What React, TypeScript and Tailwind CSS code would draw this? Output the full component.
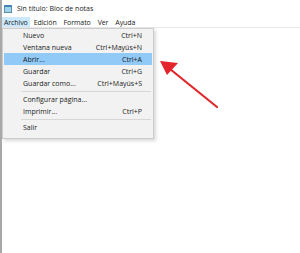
import * as React from 'react';

interface MenuItem {
	label: string;
	shortcut?: string;
	active?: boolean;
	separatorBefore?: boolean;
}

const menuItems: readonly MenuItem[] = [
	{ label: 'Nuevo', shortcut: 'Ctrl+N' },
	{ label: 'Ventana nueva', shortcut: 'Ctrl+Mayús+N' },
	{ label: 'Abrir...', shortcut: 'Ctrl+A', active: true },
	{ label: 'Guardar', shortcut: 'Ctrl+G' },
	{ label: 'Guardar como...', shortcut: 'Ctrl+Mayús+S' },
	{ label: 'Configurar página...', separatorBefore: true },
	{ label: 'Imprimir...', shortcut: 'Ctrl+P' },
	{ label: 'Salir', separatorBefore: true },
];

const menuBar = ['Archivo', 'Edición', 'Formato', 'Ver', 'Ayuda'];

function NotepadIcon() {
	return (
		<svg width="8" height="8" viewBox="0 0 8 8">
			<rect x="0.5" y="0.5" width="7" height="7" fill="#9fd3ec" stroke="#5a8fb0" strokeWidth="1" />
			<rect x="0.5" y="0.5" width="7" height="1.5" fill="#3b7fb5" />
		</svg>
	);
}

export default function App() {
	return (
		<div
			className="relative w-[300px] h-[253px] bg-white border-l-2 border-[#a8a8a8] overflow-hidden text-[#1a1a1a]"
			style={{ fontFamily: '"Open Sans", "Noto Sans", sans-serif' }}
		>
			{/* title bar */}
			<div className="h-[17px] flex items-center pl-[2px] gap-[5px]">
				<NotepadIcon />
				<span className="text-[7px] leading-none">Sin título: Bloc de notas</span>
			</div>

			{/* menu bar */}
			<div className="h-[11px] flex items-center border-b border-[#e8e8e8] text-[7px] leading-none tracking-[-0.1px]">
				{menuBar.map((m, i) => (
					<span
						key={m}
						className={`h-full flex items-center ${
							i === 0 ? 'bg-[#cce8ff] px-[2px] mr-[2px]' : 'px-[2px] mr-[3px]'
						}`}
					>
						{m}
					</span>
				))}
			</div>

			{/* dropdown */}
			<div className="absolute left-[0px] top-[28px] w-[152px] bg-[#f2f2f2] border border-[#cccccc] shadow-[2px_2px_3px_rgba(0,0,0,0.15)] pb-[5px] text-[7px] leading-none">
				{menuItems.map((item) => (
					<React.Fragment key={item.label}>
						{item.separatorBefore && (
							<div className="h-[4px] flex items-center pl-[18px] pr-[2px]">
								<div className="w-full h-px bg-[#d7d7d7]" />
							</div>
						)}
						<div
							className={`h-[12px] flex items-center justify-between pl-[19px] pr-[10px] mx-[1px] ${
								item.active ? 'bg-[#91c9f7]' : ''
							}`}
						>
							<span>{item.label}</span>
							<span>{item.shortcut}</span>
						</div>
					</React.Fragment>
				))}
			</div>

			{/* red arrow */}
			<svg className="absolute left-0 top-0" width="300" height="253" viewBox="0 0 300 253">
				<line x1="215" y1="107" x2="168" y2="69" stroke="#e3262b" strokeWidth="2.2" strokeLinecap="round" />
				<polygon points="158,61 176,63 165,75" fill="#e3262b" />
			</svg>
		</div>
	);
}
